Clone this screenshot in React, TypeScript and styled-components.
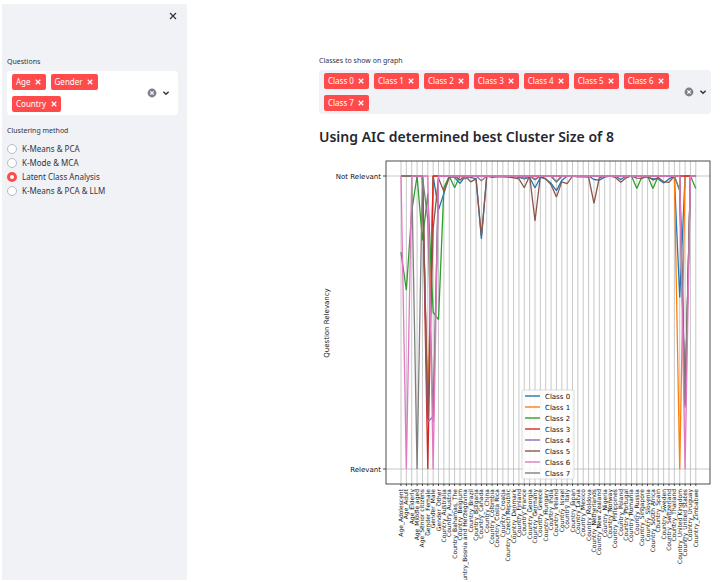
import React, { useState } from "react";
import styled, { createGlobalStyle } from "styled-components";

const GlobalStyle = createGlobalStyle`
  * { box-sizing: border-box; }
  body {
    margin: 0;
    background: #ffffff;
    color: #31333f;
    font-family: "Noto Sans", "Open Sans", sans-serif;
    font-size: 8px;
    line-height: 12px;
  }
  button, input { font: inherit; color: inherit; }
`;

const Page = styled.div`
  display: flex;
  height: 100vh;
  padding: 4px 16px 2px 2px;
  overflow: hidden;
`;

const Sidebar = styled.aside`
  display: flex;
  flex-direction: column;
  flex: 0 0 185px;
  padding: 6px 9px 0 5px;
  background: #f0f2f6;
`;

const SidebarTop = styled.div`
  display: flex;
  justify-content: flex-end;
  height: 46px;
  margin-right: -1px;
`;

const Main = styled.main`
  flex: 1;
  min-width: 0;
  padding: 51px 0 0 132px;
`;

const IconButton = styled.button<{ $size: number }>`
  display: grid;
  place-items: center;
  width: ${(p) => p.$size}px;
  height: ${(p) => p.$size}px;
  padding: 0;
  border: 0;
  background: none;
  cursor: pointer;
`;

const FieldLabel = styled.div`
  height: 12px;
  font-size: 7px;
  white-space: nowrap;
`;

const SelectBox = styled.div<{ $fill: string; $end: number }>`
  display: flex;
  align-items: center;
  margin-top: 3px;
  padding: 3px ${(p) => p.$end}px 3px 5px;
  border-radius: 4px;
  background: ${(p) => p.$fill};
`;

const Tags = styled.div<{ $reserve: number }>`
  display: flex;
  flex: 1;
  flex-wrap: wrap;
  gap: 6px 5px;
  padding-right: ${(p) => p.$reserve}px;
`;

const Tag = styled.span`
  display: inline-flex;
  align-items: center;
  gap: 3px;
  height: 16px;
  padding: 0 3px 0 4px;
  border-radius: 2px;
  background: #ff4b4b;
  color: #ffffff;
  white-space: nowrap;
`;

const BoxActions = styled.div`
  display: flex;
  gap: 2px;
`;

const RadioGroup = styled.fieldset`
  margin: 10px 0 0;
  padding: 0;
  border: 0;
`;

const Legend = styled.legend`
  height: 17px;
  padding: 0;
  font-size: 7px;
`;

const RadioRow = styled.label`
  display: flex;
  align-items: center;
  gap: 5px;
  height: 14px;
  white-space: nowrap;
`;

const Radio = styled.input`
  appearance: none;
  width: 10px;
  height: 10px;
  margin: 0;
  border: 1px solid #b9bcc4;
  border-radius: 50%;
  background: #ffffff;
  &:checked { border: 3px solid #ff4b4b; }
`;

const Title = styled.h2`
  margin: 13px 0 8px;
  color: #262730;
  font-size: 14px;
  font-weight: 600;
  line-height: 20px;
  white-space: nowrap;
`;

const Chart = styled.svg`
  display: block;
  width: 100%;
  height: auto;
  font-family: "DejaVu Sans", sans-serif;
`;

const Cross = ({ size, width = 1 }: { size: number; width?: number }) => (
  <svg width={size} height={size} viewBox="0 0 8 8" aria-hidden="true">
    <path d="M1 1 7 7M7 1 1 7" stroke="currentColor" strokeWidth={width} fill="none" />
  </svg>
);

type MultiSelectProps = {
  label: string;
  options: string[];
  fill: string;
  reserve: number;
  end: number;
};

function MultiSelect({ label, options, fill, reserve, end }: MultiSelectProps) {
  const [selected, setSelected] = useState(options);
  return (
    <div role="group" aria-label={label}>
      <FieldLabel>{label}</FieldLabel>
      <SelectBox $fill={fill} $end={end}>
        <Tags $reserve={reserve}>
          {selected.map((name) => (
            <Tag key={name}>
              {name}
              <IconButton
                $size={9}
                aria-label={`Remove ${name}`}
                onClick={() => setSelected(selected.filter((item) => item !== name))}
              >
                <Cross size={6} width={1.6} />
              </IconButton>
            </Tag>
          ))}
        </Tags>
        <BoxActions>
          <IconButton $size={12} aria-label="Clear all" onClick={() => setSelected([])}>
            <svg width="10" height="10" viewBox="0 0 10 10" aria-hidden="true">
              <circle cx="5" cy="5" r="4.4" fill="#7d808a" />
              <path d="M3.3 3.3 6.7 6.7M6.7 3.3 3.3 6.7" stroke="#ffffff" strokeWidth="1.1" />
            </svg>
          </IconButton>
          <IconButton $size={12} aria-label="Open options" onClick={() => setSelected(options)}>
            <svg width="8" height="8" viewBox="0 0 8 8" aria-hidden="true">
              <path d="M1.4 2.7 4 5.2 6.6 2.7" stroke="#31333f" strokeWidth="1.5" fill="none" />
            </svg>
          </IconButton>
        </BoxActions>
      </SelectBox>
    </div>
  );
}

const categories = [
  "Age_Adolescent", "Age_Adult", "Age_Elderly", "Age_Middle aged", "Age_Senior citizens",
  "Gender_Female", "Gender_Male", "Gender_Other",
  ...[
    "Australia", "Austria", "Bahamas, The", "Belgium", "Bosnia and Herzegovina", "Brazil",
    "Bulgaria", "Canada", "China", "Colombia", "Costa Rica", "Croatia", "Czech Republic",
    "Denmark", "Finland", "France", "Georgia", "Germany", "Greece", "Hungary", "India",
    "Ireland", "Israel", "Italy", "Japan", "Latvia", "Mexico", "Moldova", "Netherlands",
    "New Zealand", "Nigeria", "Norway", "Philippines", "Poland", "Portugal", "Romania",
    "Russia", "Singapore", "Slovenia", "South Africa", "Spain", "Sweden", "Switzerland",
    "Thailand", "United Kingdom", "United States", "Uruguay", "Zimbabwe",
  ].map((country) => `Country_${country}`),
];

type Series = { name: string; color: string; values: Record<number, number> };

// Relevancy in percent by category index; categories left out are at 0.
const series: Series[] = [
  {
    name: "Class 0",
    color: "#1f77b4",
    values: {
      5: 83, 7: 11.5, 8: 6, 10: 0.5, 11: 2.5, 13: 0.5, 14: 1, 15: 21.5, 22: 0.5, 23: 1, 24: 0.5,
      25: 4, 26: 0.5, 27: 1, 28: 2.5, 29: 5, 30: 1.5, 36: 1.2, 37: 1.4, 38: 0.4, 41: 1.2,
      46: 0.5, 47: 1, 48: 1, 49: 2.4, 50: 1, 52: 41.5,
    },
  },
  { name: "Class 1", color: "#ff7f0e", values: { 5: 80, 52: 100 } },
  {
    name: "Class 2",
    color: "#2ca02c",
    values: {
      0: 26, 1: 39, 2: 12, 4: 22, 5: 6, 6: 46.5, 7: 49, 8: 4, 10: 4, 23: 0.8, 25: 1.2,
      29: 2, 44: 4.3, 47: 4.3, 52: 5, 53: 78, 55: 4.3,
    },
  },
  { name: "Class 3", color: "#d62728", values: { 5: 100 } },
  { name: "Class 4", color: "#9467bd", values: { 5: 84, 6: 82, 53: 78, 29: 2, 25: 1.2 } },
  {
    name: "Class 5",
    color: "#8c564b",
    values: {
      5: 83, 6: 18, 7: 0.8, 8: 5.3, 9: 0.5, 11: 1.4, 13: 2, 14: 1, 15: 20.5, 17: 0.5, 18: 0.3,
      19: 0.3, 20: 0.4, 21: 0.6, 22: 1, 23: 4, 25: 15.3, 27: 1, 28: 3, 29: 7.2, 30: 2, 31: 2.6,
      33: 0.3, 34: 0.3, 35: 0.4, 36: 9.3, 37: 0.6, 40: 0.5, 41: 2.1, 42: 0.6, 44: 0.7, 45: 0.8,
      47: 1.4, 48: 0.5, 49: 2, 50: 2.2, 53: 78,
    },
  },
  {
    name: "Class 7",
    color: "#7f7f7f",
    values: { 3: 100, 5: 15, 6: 84, 10: 0.5, 12: 1, 15: 1.6, 23: 0.9, 25: 1.3, 29: 2.1, 52: 5, 53: 79 },
  },
  { name: "Class 6", color: "#e377c2", values: { 1: 100, 6: 100, 53: 100 } },
];

const classes = [...series].sort((a, b) => a.name.localeCompare(b.name));

const plot = { left: 68, top: 6, right: 392, bottom: 329, none: 21, full: 314, start: 83, step: 5.36 };

const xAt = (index: number) => plot.start + index * plot.step;
const yAt = (percent: number) => plot.none + ((plot.full - plot.none) * percent) / 100;

function RelevancyChart() {
  return (
    <Chart viewBox="1 0 392 425" role="img" aria-label="Question relevancy by class">
      <g stroke="#b0b0b0" strokeWidth="0.7">
        {categories.map((name, i) => (
          <line key={name} x1={xAt(i)} x2={xAt(i)} y1={plot.top} y2={plot.bottom} />
        ))}
        <line x1={plot.left} x2={plot.right} y1={plot.none} y2={plot.none} />
        <line x1={plot.left} x2={plot.right} y1={plot.full} y2={plot.full} />
      </g>
      <g fill="none" strokeWidth="1.3" strokeLinejoin="bevel">
        {series.map(({ name, color, values }) => (
          <polyline
            key={name}
            stroke={color}
            points={categories.map((_, i) => `${xAt(i)},${yAt(values[i] ?? 0)}`).join(" ")}
          />
        ))}
      </g>
      <g stroke="#222222" strokeWidth="0.8">
        <rect
          x={plot.left}
          y={plot.top}
          width={plot.right - plot.left}
          height={plot.bottom - plot.top}
          fill="none"
        />
        {categories.map((name, i) => (
          <line key={name} x1={xAt(i)} x2={xAt(i)} y1={plot.bottom} y2={plot.bottom + 2} />
        ))}
        <line x1={plot.left - 3} x2={plot.left} y1={plot.none} y2={plot.none} />
        <line x1={plot.left - 3} x2={plot.left} y1={plot.full} y2={plot.full} />
      </g>
      <g fontSize="7" fill="#111111" textAnchor="end">
        <text x="63" y={plot.none + 3}>Not Relevant</text>
        <text x="63" y={plot.full + 3}>Relevant</text>
      </g>
      <text transform="translate(11 168) rotate(-90)" fontSize="7" fill="#111111" textAnchor="middle">
        Question Relevancy
      </text>
      <g fontSize="6" fill="#111111" textAnchor="end">
        {categories.map((name, i) => (
          <text key={name} transform={`translate(${xAt(i) + 2} 334) rotate(-90)`}>{name}</text>
        ))}
      </g>
      <rect x="204" y="235" width="52" height="89" rx="1.5" fill="#ffffff" fillOpacity="0.85" stroke="#cccccc" strokeWidth="0.7" />
      {classes.map(({ name, color }, i) => (
        <g key={name}>
          <line x1="207" x2="222" y1={241 + i * 11} y2={241 + i * 11} stroke={color} strokeWidth="1.4" />
          <text x="227" y={244 + i * 11} fontSize="7" fill="#111111">{name}</text>
        </g>
      ))}
    </Chart>
  );
}

const methods = ["K-Means & PCA", "K-Mode & MCA", "Latent Class Analysis", "K-Means & PCA & LLM"];

export default function App() {
  const [method, setMethod] = useState(methods[2]);
  return (
    <>
      <GlobalStyle />
      <Page>
        <Sidebar>
          <SidebarTop>
            <IconButton $size={12} aria-label="Close sidebar">
              <Cross size={8} width={1.2} />
            </IconButton>
          </SidebarTop>
          <MultiSelect
            label="Questions"
            options={["Age", "Gender", "Country"]}
            fill="#ffffff"
            reserve={40}
            end={6}
          />
          <RadioGroup>
            <Legend>Clustering method</Legend>
            {methods.map((name) => (
              <RadioRow key={name}>
                <Radio type="radio" name="method" checked={method === name} onChange={() => setMethod(name)} />
                {name}
              </RadioRow>
            ))}
          </RadioGroup>
        </Sidebar>
        <Main>
          <MultiSelect
            label="Classes to show on graph"
            options={classes.map(({ name }) => name)}
            fill="#f0f2f6"
            reserve={10}
            end={2}
          />
          <Title>Using AIC determined best Cluster Size of 8</Title>
          <RelevancyChart />
        </Main>
      </Page>
    </>
  );
}
